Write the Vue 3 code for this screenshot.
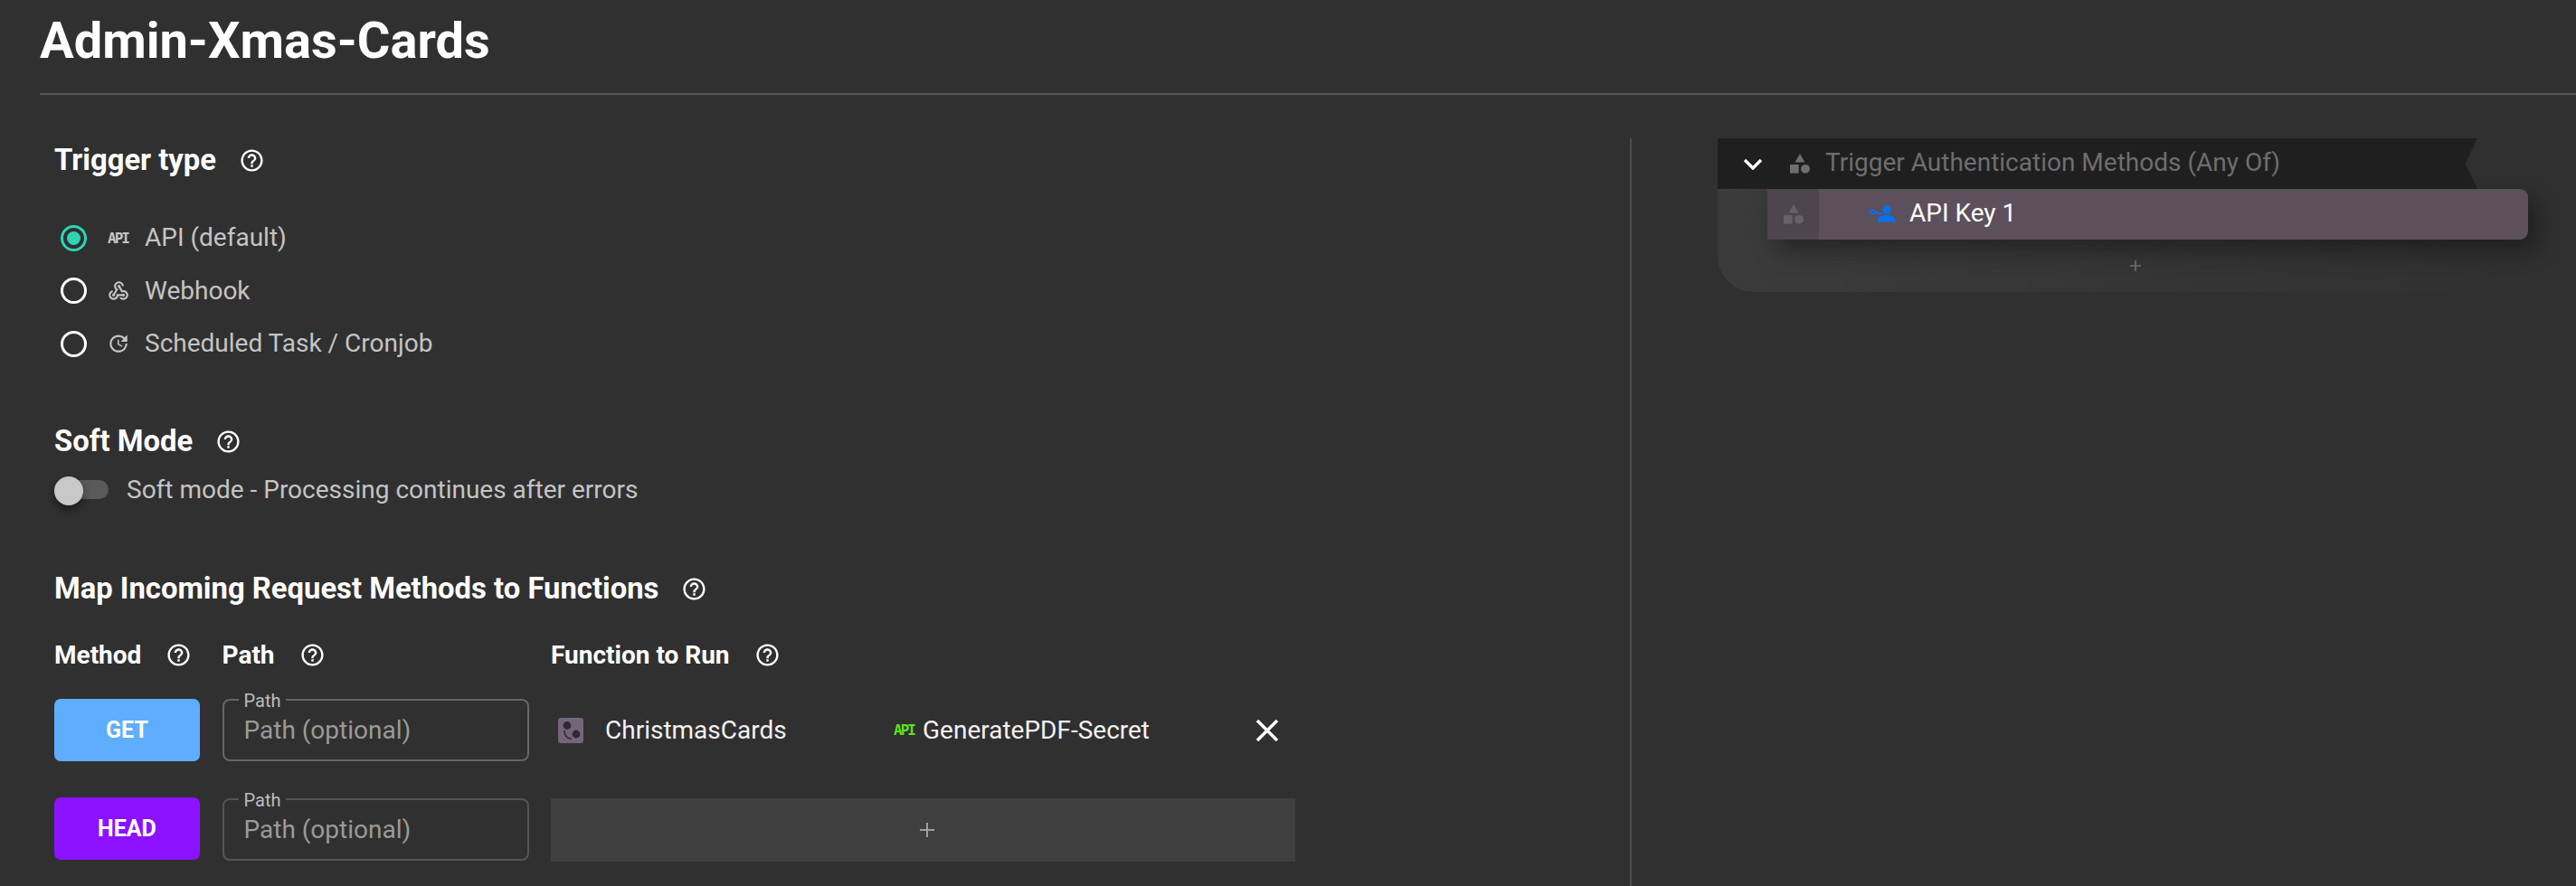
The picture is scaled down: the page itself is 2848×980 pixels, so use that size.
<script setup>
const HELP = 'M11 18h2v-2h-2v2zm1-16C6.48 2 2 6.48 2 12s4.48 10 10 10 10-4.48 10-10S17.52 2 12 2zm0 18c-4.41 0-8-3.59-8-8s3.59-8 8-8 8 3.59 8 8-3.59 8-8 8zm0-14c-2.21 0-4 1.79-4 4h2c0-1.1.9-2 2-2s2 .9 2 2c0 2-3 1.75-3 5h2c0-2.25 3-2.5 3-5 0-2.21-1.79-4-4-4z'
</script>

<template>
  <div class="page">
    <header class="top"><h1>Admin-Xmas-Cards</h1></header>
    <div class="columns">
      <main class="left">
        <div class="heading">
          <span>Trigger type</span>
          <svg class="help" viewBox="0 0 24 24"><path :d="HELP" /></svg>
        </div>
        <div class="radios">
          <label class="radio-row">
            <span class="radio on"></span>
            <span class="api-tag">API</span>
            <span>API (default)</span>
          </label>
          <label class="radio-row">
            <span class="radio"></span>
            <svg class="type-icon" viewBox="0 0 24 24"><path d="M10 15h5.88c.27-.31.67-.5 1.12-.5.83 0 1.5.67 1.5 1.5s-.67 1.5-1.5 1.5c-.44 0-.84-.19-1.12-.5H11.9c-.46 2.28-2.48 4-4.9 4-2.76 0-5-2.24-5-5 0-2.42 1.72-4.44 4-4.9v2.07c-1.16.41-2 1.53-2 2.83 0 1.65 1.35 3 3 3s3-1.35 3-3v-1zm2.5-11c1.65 0 3 1.35 3 3h2c0-2.76-2.24-5-5-5s-5 2.24-5 5c0 1.43.6 2.71 1.55 3.62l-2.35 3.9c-.68.14-1.2.75-1.2 1.48 0 .83.67 1.5 1.5 1.5s1.5-.67 1.5-1.5c0-.16-.02-.31-.07-.45l3.38-5.63C10.49 9.61 9.5 8.42 9.5 7c0-1.65 1.35-3 3-3zm4.5 9c-.64 0-1.23.2-1.72.54l-3.05-5.07C11.53 8.35 11 7.74 11 7c0-.83.67-1.5 1.5-1.5S14 6.17 14 7c0 .15-.02.29-.06.43l2.19 3.65c.28-.05.57-.08.87-.08 2.76 0 5 2.24 5 5s-2.24 5-5 5c-1.85 0-3.47-1.01-4.33-2.5h2.67c.48.32 1.05.5 1.66.5 1.65 0 3-1.35 3-3s-1.35-3-3-3z" /></svg>
            <span>Webhook</span>
          </label>
          <label class="radio-row">
            <span class="radio"></span>
            <svg class="type-icon" viewBox="0 0 24 24"><path d="M21 10.12h-6.78l2.74-2.82c-2.73-2.7-7.15-2.8-9.88-.1-2.73 2.71-2.73 7.08 0 9.79s7.15 2.71 9.88 0C18.32 15.65 19 14.08 19 12.1h2c0 1.98-.88 4.55-2.64 6.29-3.51 3.48-9.21 3.48-12.72 0-3.5-3.47-3.53-9.11-.02-12.58s9.14-3.47 12.65 0L21 3v7.12zM12.5 8v4.25l3.5 2.08-.72 1.21L11 13V8h1.5z" /></svg>
            <span>Scheduled Task / Cronjob</span>
          </label>
        </div>

        <div class="heading soft-heading">
          <span>Soft Mode</span>
          <svg class="help" viewBox="0 0 24 24"><path :d="HELP" /></svg>
        </div>
        <div class="toggle-row">
          <span class="toggle"><span class="knob"></span></span>
          <span>Soft mode - Processing continues after errors</span>
        </div>

        <div class="heading map-heading">
          <span>Map Incoming Request Methods to Functions</span>
          <svg class="help" viewBox="0 0 24 24"><path :d="HELP" /></svg>
        </div>

        <div class="table">
          <div class="col-head">
            <span>Method</span>
            <svg class="help" viewBox="0 0 24 24"><path :d="HELP" /></svg>
          </div>
          <div class="col-head">
            <span>Path</span>
            <svg class="help" viewBox="0 0 24 24"><path :d="HELP" /></svg>
          </div>
          <div class="col-head">
            <span>Function to Run</span>
            <svg class="help" viewBox="0 0 24 24"><path :d="HELP" /></svg>
          </div>

          <button class="method get">GET</button>
          <div class="field">
            <span class="field-label">Path</span>
            <span class="placeholder">Path (optional)</span>
          </div>
          <div class="fn-cell">
            <svg class="fn-icon" viewBox="0 0 28 28">
              <rect width="28" height="28" rx="3" fill="#75657a" />
              <circle cx="10" cy="8.500" r="4.400" fill="#2e2a30" />
              <circle cx="20" cy="18" r="4.400" fill="#2e2a30" />
              <path d="M7 14c0 6 3 9 8 9" fill="none" stroke="#2e2a30" stroke-width="1.600" />
            </svg>
            <span class="fn-name">ChristmasCards</span>
            <span class="api-tag green">API</span>
            <span class="fn-target">GeneratePDF-Secret</span>
            <svg class="close" viewBox="0 0 26 24"><path d="M2 1l22 22M24 1L2 23" /></svg>
          </div>

          <button class="method head">HEAD</button>
          <div class="field second">
            <span class="field-label">Path</span>
            <span class="placeholder">Path (optional)</span>
          </div>
          <button class="add">
            <svg class="plus" viewBox="0 0 18 18"><path d="M9 1v16M1 9h16" /></svg>
          </button>
        </div>
      </main>

      <aside class="right">
        <div class="auth-block">
          <div class="auth-head">
            <svg class="chevron" viewBox="0 0 22 13"><path d="M2 2l9 9 9-9" /></svg>
            <svg class="shapes" viewBox="0 0 22 22">
              <path d="M11 0l5.400 9.600H5.600z" /><rect x="0" y="12" width="9.600" height="9.600" /><circle cx="17" cy="16.800" r="4.900" />
            </svg>
            <span>Trigger Authentication Methods (Any Of)</span>
          </div>
          <div class="auth-body">
            <div class="auth-row">
              <div class="handle">
                <svg class="shapes dim" viewBox="0 0 22 22">
                  <path d="M11 0l5.400 9.600H5.600z" /><rect x="0" y="12" width="9.600" height="9.600" /><circle cx="17" cy="16.800" r="4.900" />
                </svg>
              </div>
              <div class="row-main">
                <svg class="key-user" viewBox="0 0 28 20">
                  <circle cx="19" cy="5" r="4.800" fill="#0a6fef" />
                  <path d="M9 18.500v-2.500C9 12.500 14 11 19 11s9 1.500 9 5v2.500z" fill="#0a6fef" />
                  <circle cx="3.200" cy="7.500" r="2.300" fill="none" stroke="#0a6fef" stroke-width="1.700" />
                  <path d="M5.500 7.800l8 1.400M9 8.500v2.200M11.500 9v2" fill="none" stroke="#0a6fef" stroke-width="1.700" />
                </svg>
                <span>API Key 1</span>
              </div>
            </div>
            <div class="auth-add">
              <svg class="plus small" viewBox="0 0 14 14"><path d="M7 1v12M1 7h12" /></svg>
            </div>
          </div>
        </div>
      </aside>
    </div>
  </div>
</template>

<style>
html, body { margin: 0; background: #303030; }
</style>

<style scoped>
.page {
  width: 2848px;
  height: 980px;
  overflow: hidden;
  background: #303030;
  font-family: Roboto, "Liberation Sans", sans-serif;
  color: #fff;
  box-sizing: border-box;
}
.top {
  margin-left: 44px;
  height: 103px;
  border-bottom: 2px solid #555;
}
h1 {
  margin: 0;
  font-size: 56px;
  font-weight: 700;
  line-height: 90px;
}
.columns { display: flex; }
.left {
  width: 1802px;
  box-sizing: border-box;
  padding: 52px 0 0 60px;
  flex: none;
}
.heading {
  display: flex;
  align-items: center;
  height: 40px;
  gap: 25px;
  font-size: 32.800px;
  font-weight: 700;
}
.help { width: 29px; height: 29px; fill: #fff; flex: none; }
.radios { margin-top: 37px; }
.radio-row {
  display: flex;
  align-items: center;
  height: 58.500px;
  font-size: 28px;
  color: #c4c4c4;
  padding-left: 7px;
}
.radio-row > span:last-child { margin-left: -1px; padding-bottom: 1px; }
.radio {
  width: 29px;
  height: 29px;
  box-sizing: border-box;
  border: 3px solid #fff;
  border-radius: 50%;
  flex: none;
  margin-right: 23px;
}
.radio.on {
  border-color: #2fd4b4;
  position: relative;
}
.radio.on::after {
  content: "";
  position: absolute;
  inset: 4px;
  border-radius: 50%;
  background: #2fd4b4;
}
.api-tag {
  width: 23px;
  flex: none;
  margin-right: 19px;
  font-family: "DejaVu Sans Mono", monospace;
  font-size: 16px;
  font-weight: 700;
  letter-spacing: -2px;
  color: #c4c4c4;
  white-space: nowrap;
}
.type-icon {
  width: 26px;
  height: 26px;
  fill: #c4c4c4;
  flex: none;
  margin: 0 17px 0 -1px;
}
.soft-heading { margin-top: 58.500px; }
.toggle-row {
  margin-top: 13px;
  height: 40px;
  display: flex;
  align-items: center;
  font-size: 28px;
  color: #c4c4c4;
  gap: 20px;
}
.toggle {
  position: relative;
  width: 60px;
  height: 21px;
  border-radius: 11px;
  background: #5a5a5a;
  flex: none;
}
.knob {
  position: absolute;
  left: 0;
  top: -4px;
  width: 32px;
  height: 32px;
  border-radius: 50%;
  background: #c8c8c8;
  box-shadow: 0 5px 10px rgba(0, 0, 0, .45);
}
.map-heading { margin-top: 70px; }
.table {
  margin-top: 33px;
  display: grid;
  grid-template-columns: 161px 339px 823px;
  grid-template-rows: 40px 98px 110px;
  column-gap: 24.500px;
}
.col-head {
  display: flex;
  align-items: center;
  gap: 27px;
  font-size: 28px;
  font-weight: 700;
  white-space: nowrap;
}
.method {
  margin-top: 29px;
  height: 69px;
  border: 0;
  border-radius: 7px;
  color: #fff;
  font: 700 25px Roboto, sans-serif;
  padding: 0;
}
.method.get { background: #5fadff; }
.method.head { background: #8c12ff; margin-top: 40px; }
.field {
  position: relative;
  margin-top: 29px;
  height: 69px;
  box-sizing: border-box;
  border: 2px solid #666;
  border-radius: 8px;
  display: flex;
  align-items: center;
  padding-left: 22px;
}
.field.second { margin-top: 41px; border-color: #555; }
.field-label {
  position: absolute;
  left: 16px;
  top: -11px;
  padding: 0 6px;
  background: #303030;
  font-size: 20px;
  line-height: 22px;
  color: #bdbdbd;
}
.placeholder { font-size: 28px; color: #9a9a9a; }
.fn-cell {
  margin-top: 29px;
  height: 69px;
  display: flex;
  align-items: center;
  font-size: 28px;
  padding-left: 8px;
}
.fn-icon { width: 28px; height: 28px; flex: none; margin-right: 24px; }
.fn-name { width: 319px; flex: none; color: #f2f2f2; }
.api-tag.green { color: #5fe01e; margin-right: 10px; }
.fn-target { color: #f2f2f2; flex: 1; margin-left: -1px; }
.close {
  width: 26px;
  height: 24px;
  flex: none;
  margin-right: 18px;
  fill: none;
  stroke: #fff;
  stroke-width: 3.500;
}
.add {
  margin-top: 41px;
  height: 70px;
  border: 0;
  padding: 0 0 0 8px;
  background: #3f3f3f;
  display: flex;
  align-items: center;
  justify-content: center;
}
.plus { width: 18px; height: 18px; fill: none; stroke: #a0a0a0; stroke-width: 2; }
.plus.small { width: 14px; height: 14px; stroke: #707070; stroke-width: 1.600; }

.right {
  flex: 1;
  margin-top: 48px;
  height: 827px;
  border-left: 2px solid #4d4d4d;
  padding-left: 95px;
  box-sizing: border-box;
}
.auth-head {
  width: 840px;
  height: 56px;
  background: #1f1f1f;
  display: flex;
  align-items: center;
  font-size: 28px;
  color: #6e6e6e;
  clip-path: polygon(0 0, 100% 0, 98.400% 50%, 100% 100%, 0 100%);
  box-sizing: border-box;
  padding: 0 0 3px 28px;
}
.auth-head > span { margin-left: -1px; }
.chevron { width: 22px; height: 13px; fill: none; stroke: #fff; stroke-width: 3.400; margin: 3px 30px 0 0; flex: none; }
.shapes { width: 22px; height: 22px; fill: #6e6e6e; flex: none; margin-right: 18px; }
.auth-head .shapes { margin-top: 3px; }
.shapes.dim { fill: #6b5f6b; margin: 0; }
.auth-body {
  width: 900px;
  height: 114px;
  background: linear-gradient(to right, #3b3b3b, #363636 45%, #303030 95%);
  border-bottom-left-radius: 40px;
  box-sizing: border-box;
  padding-left: 55px;
}
.auth-row {
  width: 841px;
  height: 56px;
  display: flex;
  border-radius: 0 9px 9px 0;
  overflow: hidden;
  box-shadow: 10px 12px 26px rgba(0, 0, 0, .35);
  background: #5c505c;
}
.handle {
  width: 57px;
  background: #4f454f;
  display: flex;
  align-items: center;
  justify-content: center;
  flex: none;
}
.row-main {
  display: flex;
  align-items: center;
  padding: 0 0 3px 56px;
  font-size: 28px;
  color: #fff;
}
.row-main > span { margin-left: -1px; }
.key-user { width: 28px; height: 20px; margin: 3px 17px 0 0; flex: none; }
.auth-add {
  height: 58px;
  display: flex;
  align-items: center;
  justify-content: center;
  width: 814px;
}
</style>
